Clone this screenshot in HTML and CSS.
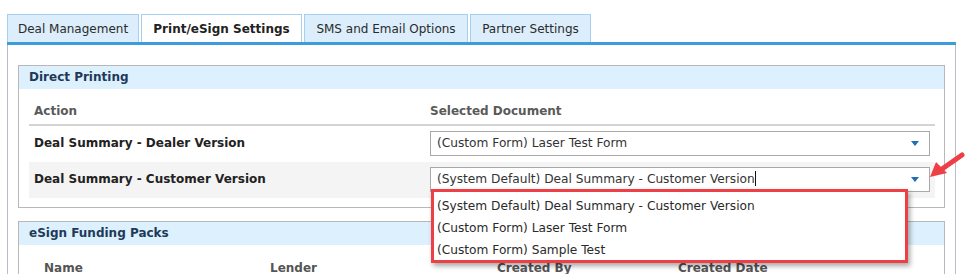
FILE: index.html
```html
<!DOCTYPE html>
<html>
<head>
<meta charset="utf-8">
<link rel="stylesheet" href="styles.css">
</head>
<body>
<div class="page">
  <div class="tabs">
    <div class="tab t1">Deal Management</div>
    <div class="tab active t2">Print/eSign Settings</div>
    <div class="tab t3">SMS and Email Options</div>
    <div class="tab t4">Partner Settings</div>
  </div>
  <div class="panel">
    <div class="box">
      <div class="box-head">Direct Printing</div>
      <div class="box-body">
        <div class="row head">
          <div class="c1">Action</div>
          <div class="c2">Selected Document</div>
        </div>
        <div class="row">
          <div class="c1 lbl">Deal Summary - Dealer Version</div>
          <div class="c2"><div class="select"><span>(Custom Form) Laser Test Form</span><i class="caret"></i></div></div>
        </div>
        <div class="row alt">
          <div class="c1 lbl">Deal Summary - Customer Version</div>
          <div class="c2"><div class="select"><span>(System Default) Deal Summary - Customer Version<b class="cursor"></b></span><i class="caret"></i></div></div>
        </div>
      </div>
    </div>
    <div class="box second">
      <div class="box-head">eSign Funding Packs</div>
      <div class="cols">
        <div class="h n">Name</div>
        <div class="h l">Lender</div>
        <div class="h cb">Created By</div>
        <div class="h cd">Created Date</div>
      </div>
    </div>
  </div>
  <div class="dropdown">
    <div class="opt">(System Default) Deal Summary - Customer Version</div>
    <div class="opt">(Custom Form) Laser Test Form</div>
    <div class="opt">(Custom Form) Sample Test</div>
  </div>
  <svg class="arrow" width="40" height="34" viewBox="0 0 40 34">
    <path d="M34 5 L14 19" stroke="#ee3f47" stroke-width="5" stroke-linecap="round" fill="none"/>
    <path d="M2 27 L8 12 L19 23 Z" fill="#ee3f47"/>
  </svg>
</div>
</body>
</html>
```
FILE: styles.css
```css
html, body { margin: 0; padding: 0; background: #fff; }
body { font-family: "DejaVu Sans", Verdana, sans-serif; font-size: 12px; color: #222; }
.page { position: relative; width: 967px; height: 274px; overflow: hidden; }
.tabs {
  display: flex; gap: 2px; margin-left: 7px; padding-top: 14px; width: 949px;
  border-bottom: 3px solid #3d9ddc; height: 28px; align-items: stretch;
}
.tab {
  box-sizing: border-box; background: #dcedfb; border: 1px solid #a6cff0; border-bottom: none;
  font-size: 12px; color: #2b2b2b; display: flex; align-items: center; justify-content: center;
}
.t1 { width: 132px; }
.t2 { width: 161px; }
.t3 { width: 164px; }
.t4 { width: 121px; }
.tab.active { background: #fff; font-weight: bold; color: #222; border-color: #a6cff0; }
.panel {
  width: 949px; margin-left: 7px; box-sizing: border-box; border-left: 1px solid #b6bec6; border-right: 1px solid #b6bec6;
  padding: 20px 10px 0 10px; height: 230px;
}
.box { border: 1px solid #b8b8b8; }
.box-head {
  background: #ddf0fd; height: 23px; line-height: 23px; padding-left: 10px;
  font-weight: bold; font-size: 12px; color: #1e3a58;
}
.box-body { padding: 0 9px 9px 10px; }
.row { display: flex; align-items: center; height: 36px; }
.row.head {
  height: 20px; padding-top: 3px; margin-top: 12px; border-bottom: 2px solid #d4d4d4;
  align-items: flex-start; font-weight: bold; color: #5a5a5a; font-size: 12px;
}
.row.alt { background: #f4f4f4; }
.c1 { width: 396px; padding-left: 5px; }
.lbl { font-weight: bold; color: #222; font-size: 12px; padding-bottom: 2px; }
.c2 { flex: 1; padding-bottom: 1px; }
.select {
  width: 500px; height: 25px; box-sizing: border-box; border: 1px solid #a9a9a9; background: #fff;
  display: flex; align-items: center; justify-content: space-between; padding: 0 10px 2px 6px; color: #333; font-size: 12.2px;
}
.caret { width: 0; height: 0; border-left: 4px solid transparent; border-right: 4px solid transparent; border-top: 5px solid #1f6eb6; margin-top: 2px; }
.cursor { display: inline-block; width: 1px; height: 15px; background: #111; vertical-align: -3px; }
.second { margin-top: 13px; height: 60px; }
.cols { position: relative; height: 30px; font-weight: bold; color: #555; font-size: 12px; }
.h { position: absolute; top: 16px; }
.n { left: 25px; }
.l { left: 251px; }
.cb { left: 478px; }
.cd { left: 659px; }
.dropdown {
  position: absolute; left: 431px; top: 189px; width: 477px; height: 74px; box-sizing: border-box;
  border: 3px solid #ee3f47; background: #fff; box-shadow: 2px 3px 5px rgba(0,0,0,0.35);
  padding-top: 3px; color: #2a2a2a; font-size: 12.2px;
}
.opt { height: 22px; line-height: 22px; padding-left: 3px; }
.arrow { position: absolute; left: 928px; top: 150px; }
```
